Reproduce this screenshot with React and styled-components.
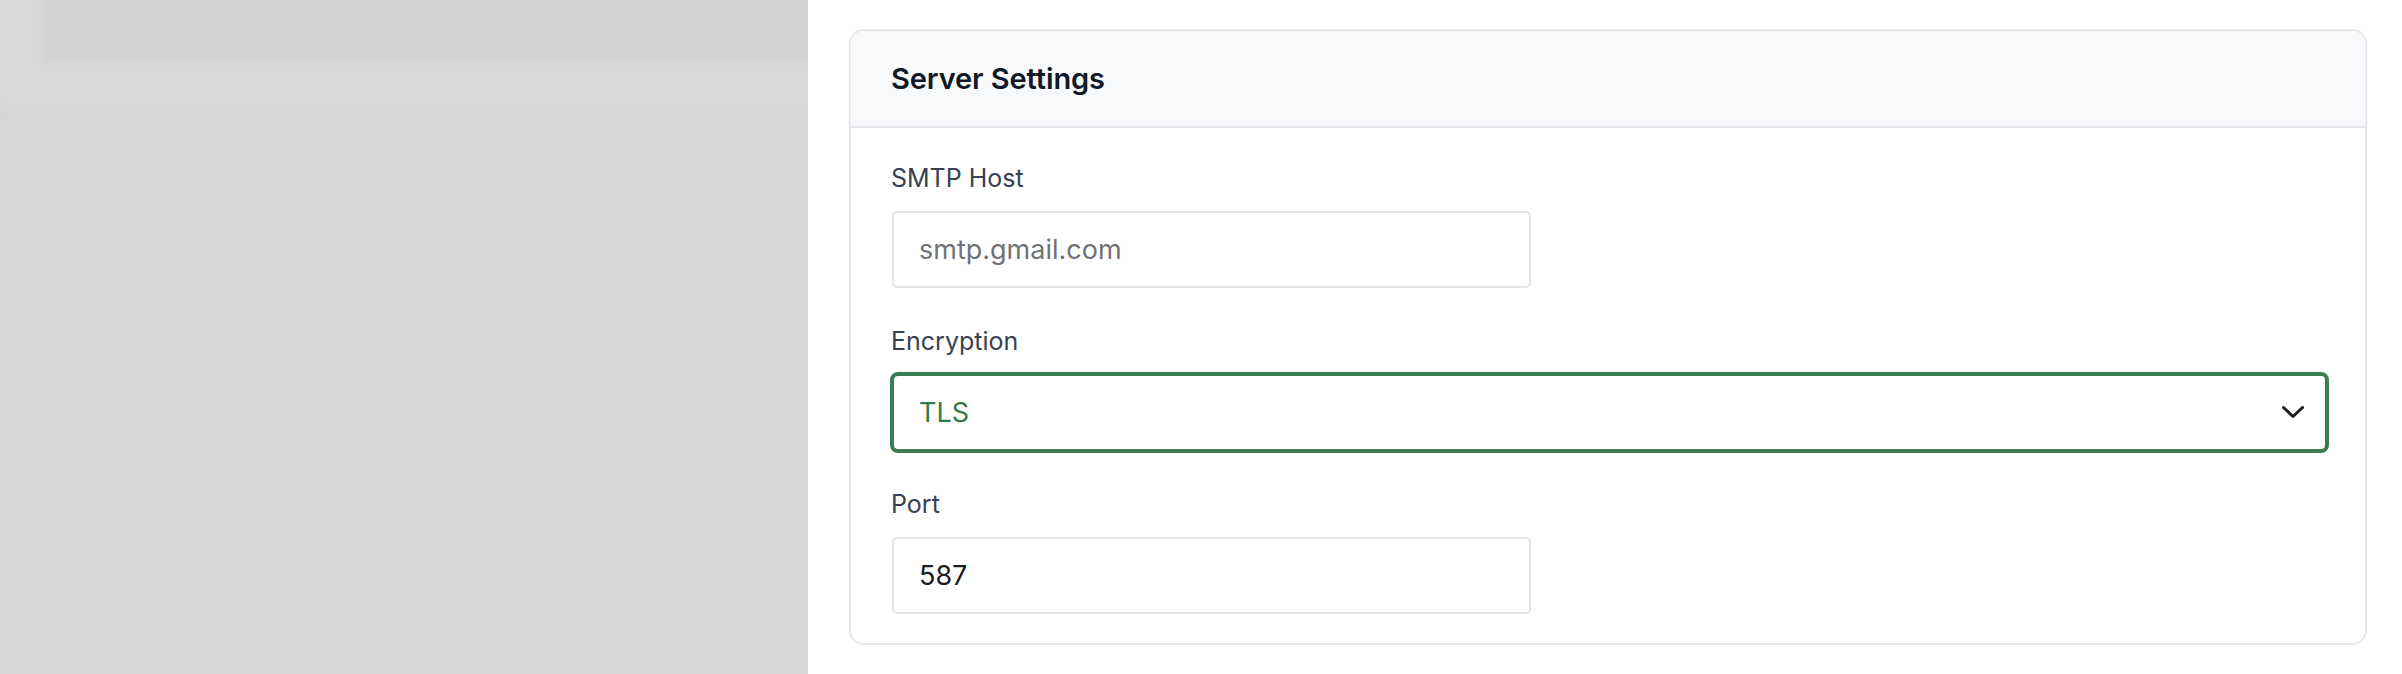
import React, { useState } from "react";
import styled, { createGlobalStyle } from "styled-components";

const GlobalStyle = createGlobalStyle`
  html, body {
    margin: 0;
    padding: 0;
    background: #ffffff;
  }
  body {
    font-family: Inter, "Noto Sans", "Liberation Sans", sans-serif;
    -webkit-font-smoothing: antialiased;
  }
  * {
    box-sizing: border-box;
  }
`;

const Colors = {
  border: "#e6e7eb",
  inputBorder: "#e3e3e8",
  headerBg: "#f8f9fb",
  title: "#111827",
  label: "#374151",
  placeholder: "#727276",
  text: "#1c1c1e",
  green: "#3a7d52",
  greenText: "#2f7a4b",
};

const Page = styled.div`
  display: grid;
  grid-template-columns: 808px 1fr;
  height: 674px;
  overflow: hidden;
`;

const Backdrop = styled.div`
  background: #d6d7d9;
  overflow: hidden;
`;

const GhostBar = styled.div`
  display: flex;
  height: 132px;
  margin: -22px -30px 0 -6px;
  padding-left: 51px;
  background: #d9d9d9;
  filter: blur(5px);
`;

const GhostStrip = styled.div`
  flex: 1;
  height: 84px;
  background: #d0d1d3;
`;

const Drawer = styled.div`
  background: #ffffff;
  padding: 29px 35px 0 41px;
`;

const Card = styled.section`
  border: 2px solid ${Colors.border};
  border-radius: 15px;
  overflow: hidden;
  background: #ffffff;
`;

const CardHeader = styled.header`
  display: flex;
  align-items: center;
  height: 97px;
  padding: 0 40px;
  background: ${Colors.headerBg};
  border-bottom: 2px solid ${Colors.border};
`;

const Title = styled.h2`
  margin: 0;
  font-size: 29px;
  font-weight: 600;
  color: ${Colors.title};
  letter-spacing: -0.1px;
`;

const CardBody = styled.div`
  display: flex;
  flex-direction: column;
  gap: 35px;
  padding: 32px 38px 29px 40px;
`;

const Field = styled.div`
  display: flex;
  flex-direction: column;
  align-items: flex-start;
  gap: 15px;
`;

const Label = styled.label`
  font-size: 25px;
  line-height: 36px;
  color: ${Colors.label};
`;

const TextInput = styled.input`
  width: 639px;
  height: 77px;
  margin-left: 1px;
  padding: 0 25px;
  border: 2px solid ${Colors.inputBorder};
  border-radius: 5px;
  background: #ffffff;
  font-family: Inter, "Liberation Sans", sans-serif;
  font-size: 27px;
  color: ${Colors.text};
  outline: none;

  &::placeholder {
    color: ${Colors.placeholder};
  }
`;

const SelectTrigger = styled.button`
  display: flex;
  align-items: center;
  justify-content: space-between;
  width: calc(100% - 1px);
  height: 77px;
  margin-left: 1px;
  padding: 0 21px 0 25px;
  border: 2px solid ${Colors.green};
  border-radius: 6px;
  box-shadow: 0 0 0 2px ${Colors.green};
  background: #ffffff;
  font-family: Inter, "Liberation Sans", sans-serif;
  font-size: 27px;
  color: ${Colors.greenText};
  cursor: pointer;
`;

const Chevron = () => (
  <svg width="22" height="13" viewBox="0 0 22 13" fill="none">
    <polyline
      points="1.5,1.5 11,10.5 20.5,1.5"
      stroke="#1f1f1f"
      strokeWidth="3"
      strokeLinecap="round"
      strokeLinejoin="round"
    />
  </svg>
);

const App = () => {
  const [host, setHost] = useState("");
  const [port, setPort] = useState("587");

  return (
    <>
      <GlobalStyle />
      <Page>
        <Backdrop>
          <GhostBar>
            <GhostStrip />
          </GhostBar>
        </Backdrop>
        <Drawer>
          <Card>
            <CardHeader>
              <Title>Server Settings</Title>
            </CardHeader>
            <CardBody>
              <Field>
                <Label htmlFor="smtp-host">SMTP Host</Label>
                <TextInput
                  id="smtp-host"
                  placeholder="smtp.gmail.com"
                  value={host}
                  onChange={(e) => setHost(e.target.value)}
                />
              </Field>
              <Field>
                <Label>Encryption</Label>
                <SelectTrigger type="button">
                  <span>TLS</span>
                  <Chevron />
                </SelectTrigger>
              </Field>
              <Field>
                <Label htmlFor="smtp-port">Port</Label>
                <TextInput
                  id="smtp-port"
                  value={port}
                  onChange={(e) => setPort(e.target.value)}
                />
              </Field>
            </CardBody>
          </Card>
        </Drawer>
      </Page>
    </>
  );
};

export default App;
